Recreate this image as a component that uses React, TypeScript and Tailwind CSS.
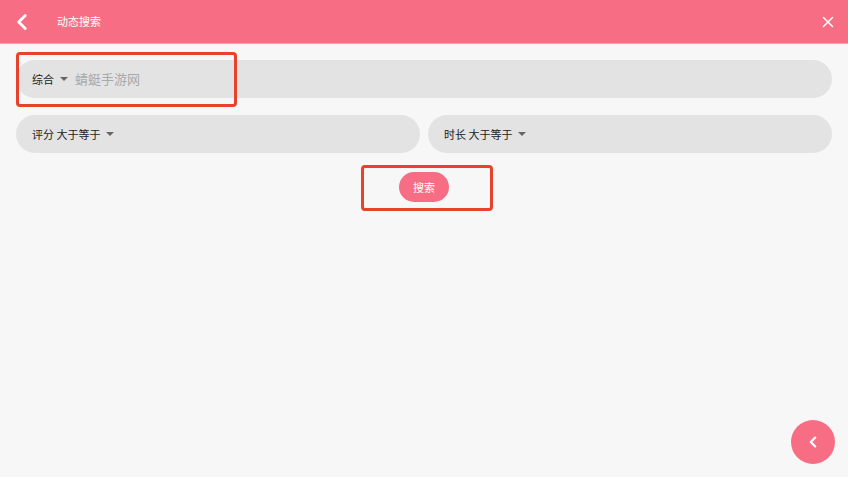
import { ChevronLeft, X } from "lucide-react";

const font = { fontFamily: '"Noto Sans CJK SC", "Noto Sans", sans-serif' };

const Caret = () => (
  <span className="inline-block ml-[6px] w-0 h-0 border-l-[4px] border-r-[4px] border-t-[4px] border-l-transparent border-r-transparent border-t-[#666]" />
);

export default function App() {
  return (
    <div className="relative w-[848px] h-[477px] bg-[#f7f7f7] overflow-hidden" style={font}>
      {/* header */}
      <div className="h-[44px] bg-[#f76e84] flex items-center border-b border-[#f9a0ae]">
        <ChevronLeft size={26} strokeWidth={2.6} className="text-white ml-[9px]" />
        <span className="ml-[22px] text-white text-[11px]">动态搜索</span>
        <X size={18} strokeWidth={2} className="text-white ml-auto mr-[11px]" />
      </div>

      <div className="px-[16px] pt-[16px] flex flex-col gap-[17px]">
        <div className="h-[38px] rounded-full bg-[#e3e3e3] flex items-center pl-[16px]">
          <span className="text-[11px] text-[#222]">综合</span>
          <Caret />
          <span className="ml-[7px] text-[13px] text-[#a9a9a9]">蜻蜓手游网</span>
        </div>
        <div className="flex gap-[8px]">
          <div className="flex-1 h-[38px] rounded-full bg-[#e3e3e3] flex items-center pl-[16px]">
            <span className="text-[11px] text-[#222]">评分 大于等于</span>
            <Caret />
          </div>
          <div className="flex-1 h-[38px] rounded-full bg-[#e3e3e3] flex items-center pl-[16px]">
            <span className="text-[11px] text-[#222]">时长 大于等于</span>
            <Caret />
          </div>
        </div>
      </div>

      <div className="flex justify-center mt-[19px]">
        <button className="w-[50px] h-[30px] rounded-full bg-[#f76e84] text-white text-[11px]">搜索</button>
      </div>

      {/* annotation boxes */}
      <div className="absolute left-[16px] top-[52px] w-[221px] h-[55px] border-[3px] border-[#e8412c] rounded-[4px]" />
      <div className="absolute left-[361px] top-[165px] w-[132px] h-[46px] border-[3px] border-[#e8412c] rounded-[4px]" />

      {/* fab */}
      <div className="absolute left-[791px] top-[420px] w-[44px] h-[44px] rounded-full bg-[#f76e84] flex items-center justify-center">
        <ChevronLeft size={18} strokeWidth={3} className="text-white" />
      </div>
    </div>
  );
}
